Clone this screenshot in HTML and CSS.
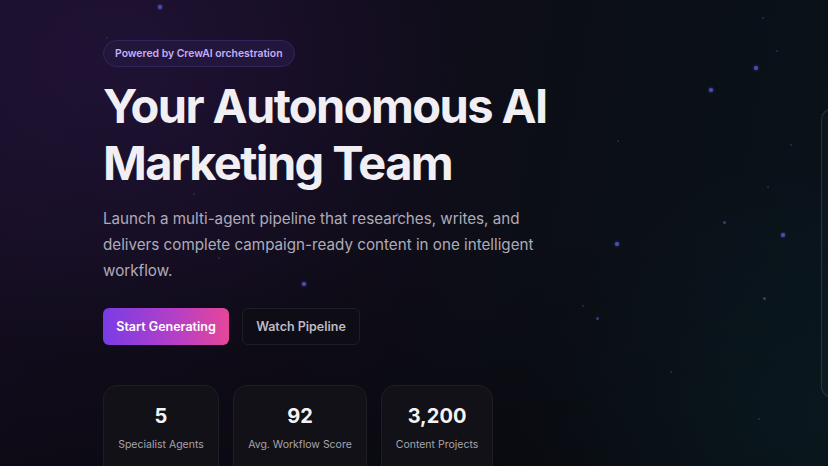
FILE: index.html
```html
<!DOCTYPE html>
<html lang="en">
<head>
<meta charset="utf-8">
<title>Autonomous AI Marketing Team</title>
<link rel="stylesheet" href="styles.css">
</head>
<body>
<div class="page">
  <div class="stars" aria-hidden="true">
    <span class="star s1" style="left:158px;top:5px"></span>
    <span class="star s3" style="left:106px;top:37px"></span>
    <span class="star s3" style="left:193px;top:193px"></span>
    <span class="star s2" style="left:396px;top:213px"></span>
    <span class="star s3" style="left:218px;top:257px"></span>
    <span class="star s1" style="left:302px;top:282px"></span>
    <span class="star s2" style="left:307px;top:385px"></span>
    <span class="star s1" style="left:754px;top:66px"></span>
    <span class="star s1" style="left:709px;top:88px"></span>
    <span class="star s1" style="left:615px;top:242px"></span>
    <span class="star s2" style="left:723px;top:221px"></span>
    <span class="star s1" style="left:781px;top:233px"></span>
    <span class="star s2" style="left:763px;top:297px"></span>
    <span class="star s2" style="left:596px;top:317px"></span>
    <span class="star s3" style="left:776px;top:50px"></span>
    <span class="star s3" style="left:617px;top:140px"></span>
    <span class="star s3" style="left:790px;top:144px"></span>
    <span class="star s3" style="left:767px;top:186px"></span>
    <span class="star s3" style="left:762px;top:17px"></span>
    <span class="star s3" style="left:582px;top:305px"></span>
    <span class="star s3" style="left:670px;top:371px"></span>
    <span class="star s3" style="left:758px;top:418px"></span>
  </div>

  <main class="hero">
    <section class="hero-copy">
      <span class="pill">Powered by CrewAI orchestration</span>
      <h1 class="title">Your Autonomous AI<br>Marketing Team</h1>
      <p class="lead">Launch a multi-agent pipeline that researches, writes, and delivers complete campaign-ready content in one intelligent workflow.</p>
      <div class="actions">
        <a class="btn btn-primary" href="#">Start Generating</a>
        <a class="btn btn-ghost" href="#">Watch Pipeline</a>
      </div>
      <div class="stats">
        <div class="stat">
          <div class="stat-value">5</div>
          <div class="stat-label">Specialist Agents</div>
        </div>
        <div class="stat">
          <div class="stat-value">92</div>
          <div class="stat-label">Avg. Workflow Score</div>
        </div>
        <div class="stat">
          <div class="stat-value">3,200</div>
          <div class="stat-label">Content Projects</div>
        </div>
      </div>
    </section>
    <aside class="hero-visual">
      <div class="preview-card"></div>
    </aside>
  </main>
</div>
</body>
</html>
```

FILE: styles.css
```css
* { box-sizing: border-box; }

html, body {
  margin: 0;
  padding: 0;
  height: 100%;
}

body {
  font-family: "Inter", "Noto Sans", sans-serif;
  background: #0c0c12;
  color: #f2f0f5;
  overflow: hidden;
}

.page {
  position: relative;
  width: 828px;
  height: 466px;
  overflow: hidden;
  background:
    radial-gradient(ellipse 520px 420px at 120px 60px, rgba(44, 22, 74, 0.5), rgba(44, 22, 74, 0) 70%),
    radial-gradient(ellipse 420px 380px at 820px 420px, rgba(10, 34, 40, 0.5), rgba(10, 34, 40, 0) 70%),
    linear-gradient(180deg, rgba(0,0,0,0) 50%, rgba(6, 6, 10, 0.45) 100%),
    linear-gradient(100deg, #150e22 0%, #100c19 40%, #0b0f16 70%, #09121a 100%);
}

.stars {
  position: absolute;
  inset: 0;
  pointer-events: none;
}

.star {
  position: absolute;
  border-radius: 50%;
}
.s1 { width: 4px; height: 4px; background: #4a4fb8; box-shadow: 0 0 3px rgba(90, 95, 220, 0.7); }
.s2 { width: 3px; height: 3px; background: #363b86; }
.s3 { width: 2px; height: 2px; background: #2a2c4a; }

.hero {
  position: relative;
  display: grid;
  grid-template-columns: 442px 380px;
  column-gap: 276px;
  padding: 40px 0 0 103px;
  width: 1300px;
}

.hero-copy {
  display: flex;
  flex-direction: column;
  align-items: flex-start;
}

.pill {
  display: inline-flex;
  align-items: center;
  height: 27px;
  padding: 0 11px;
  border-radius: 999px;
  background: #23163d;
  border: 1px solid #35245a;
  color: #c3aef5;
  font-size: 10.4px;
  font-weight: 600;
}

.title {
  margin: 10px 0 0;
  font-size: 47px;
  line-height: 57px;
  font-weight: 700;
  letter-spacing: -1.6px;
  color: #f1eff3;
  white-space: nowrap;
}

.lead {
  margin: 15px 0 0;
  width: 450px;
  font-size: 15.2px;
  line-height: 26px;
  color: #aeabb9;
}

.actions {
  display: flex;
  gap: 13px;
  margin-top: 24px;
}

.btn {
  display: inline-flex;
  align-items: center;
  justify-content: center;
  height: 37px;
  border-radius: 6px;
  font-size: 12.5px;
  font-weight: 600;
  text-decoration: none;
}

.btn-primary {
  width: 126px;
  color: #fff;
  background: linear-gradient(90deg, #7a3ce6 0%, #b23fc8 55%, #e64699 100%);
}

.btn-ghost {
  width: 118px;
  color: #bdbac6;
  background: #0e0c14;
  border: 1px solid #1f1d28;
}

.stats {
  display: flex;
  gap: 14px;
  margin-top: 40px;
}

.stat {
  height: 96px;
  padding: 16px 10px 0;
  border-radius: 14px;
  background: #121117;
  border: 1px solid #1e1d25;
  display: flex;
  flex-direction: column;
  align-items: center;
}
.stat:nth-child(1) { width: 116px; }
.stat:nth-child(2) { width: 134px; }
.stat:nth-child(3) { width: 112px; }

.stat-value {
  font-size: 20px;
  line-height: 28px;
  font-weight: 700;
  color: #f4f3f6;
}

.stat-label {
  margin-top: 8px;
  font-size: 10.5px;
  line-height: 14px;
  color: #a6a4ae;
  white-space: nowrap;
}

.hero-visual {
  padding-top: 68px;
}

.preview-card {
  width: 380px;
  height: 290px;
  border-radius: 12px;
  background: rgba(255, 255, 255, 0.02);
  border: 1px solid rgba(170, 190, 210, 0.16);
}
```
